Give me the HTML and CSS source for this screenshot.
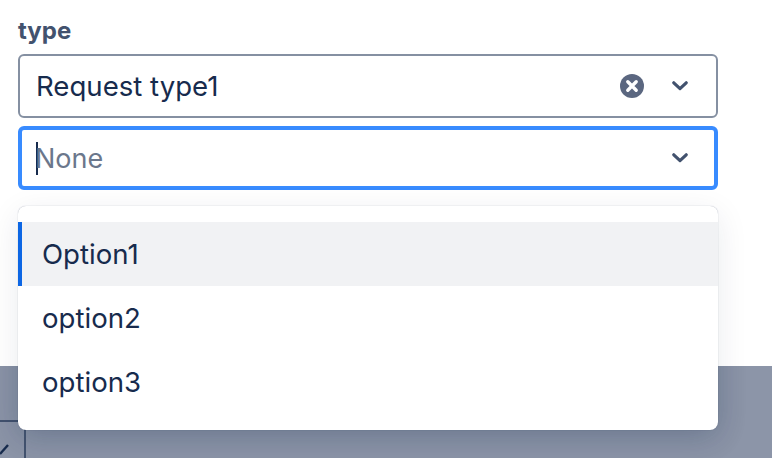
FILE: index.html
```html
<!DOCTYPE html>
<html lang="en">
<head>
    <meta charset="UTF-8">
    <meta name="viewport" content="width=device-width, initial-scale=1.0">
    <title>Request type</title>
    <link rel="stylesheet" href="styles.css">
</head>
<body>

    <div class="form">
        <div class="field-label">type</div>

        <div class="select">
            <span class="select-value">Request type1</span>
            <svg class="clear-icon" width="24" height="24" viewBox="0 0 24 24">
                <circle cx="12" cy="12" r="12" fill="#5b6780"/>
                <path d="M7.8 7.8l8.4 8.4M16.2 7.8l-8.4 8.4" stroke="#fff" stroke-width="3.4" stroke-linecap="round"/>
            </svg>
            <svg class="chevron" width="16" height="10" viewBox="0 0 16 10">
                <path d="M1.8 1.8L8 7.6l6.2-5.8" fill="none" stroke="#42526e" stroke-width="3.2" stroke-linecap="round" stroke-linejoin="round"/>
            </svg>
        </div>

        <div class="select select-focused">
            <span class="caret"></span>
            <span class="select-placeholder">None</span>
            <svg class="chevron" width="16" height="10" viewBox="0 0 16 10">
                <path d="M1.8 1.8L8 7.6l6.2-5.8" fill="none" stroke="#42526e" stroke-width="3.2" stroke-linecap="round" stroke-linejoin="round"/>
            </svg>
        </div>
    </div>

    <!-- Dimmed page behind the dialog -->
    <div class="backdrop">
        <div class="backdrop-line"></div>
        <div class="backdrop-cell">
            <svg class="backdrop-check" width="12" height="14" viewBox="0 0 12 14">
                <path d="M0 12L8 3" fill="none" stroke="#172b4d" stroke-width="2.4"/>
            </svg>
        </div>
    </div>

    <div class="menu">
        <div class="menu-item menu-item-active">Option1</div>
        <div class="menu-item">option2</div>
        <div class="menu-item">option3</div>
    </div>

</body>
</html>
```

FILE: styles.css
```css
/* Basic Reset */
* {
    margin: 0;
    padding: 0;
    box-sizing: border-box;
}

body {
    font-family: 'Inter', 'Liberation Sans', sans-serif;
    background: #fff;
    color: #172b4d;
    width: 772px;
    height: 458px;
    overflow: hidden;
    position: relative;
    display: flex;
    flex-direction: column;
}

/* Form area */
.form {
    height: 366px;
    padding: 17px 54px 0 18px;
    display: flex;
    flex-direction: column;
}

.field-label {
    font-size: 24px;
    line-height: 28px;
    font-weight: 700;
    color: #42526e;
    margin-bottom: 9px;
}

.select {
    height: 64px;
    border: 2px solid #8590a2;
    border-radius: 6px;
    background: #fff;
    padding: 0 28px 0 16px;
    margin-bottom: 8px;
    display: flex;
    align-items: center;
    font-size: 27.6px;
}

.select-focused {
    border: 4px solid #388bff;
    padding: 0 26px 0 14px;
}

.select-value {
    flex: 1;
}

.select-placeholder {
    flex: 1;
    font-size: 27px;
    color: #6b778c;
}

.caret {
    width: 2px;
    height: 33px;
    background: #172b4d;
    margin-right: -3px;
}

.clear-icon {
    margin-right: 28px;
}

/* Dropdown */
.menu {
    position: absolute;
    top: 206px;
    left: 18px;
    width: 700px;
    height: 224px;
    padding: 16px 0;
    background: #fff;
    border-radius: 8px;
    box-shadow: 0 0 1px rgba(9, 30, 66, 0.4), 0 8px 32px rgba(9, 30, 66, 0.09);
}

.menu-item {
    height: 64px;
    padding-left: 24px;
    display: flex;
    align-items: center;
    font-size: 27.6px;
}

.menu-item-active {
    background: #f1f2f4;
    border-left: 4px solid #0c66e4;
    padding-left: 20px;
}

/* Backdrop */
.backdrop {
    flex: 1;
    background: #8c95a8;
    position: relative;
    overflow: hidden;
}

/* extra menu shadow, only shows on the dark part */
.backdrop::before {
    content: "";
    position: absolute;
    top: -160px;
    left: 18px;
    width: 700px;
    height: 224px;
    border-radius: 8px;
    box-shadow: 0 6px 30px rgba(9, 30, 66, 0.16);
}

.backdrop-line {
    height: 2px;
    width: 24px;
    margin-top: 54px;
    background: #42526e;
}

.backdrop-cell {
    width: 26px;
    height: 36px;
    border-right: 2px solid #42526e;
    position: relative;
}

.backdrop-check {
    position: absolute;
    left: 0;
    top: 20px;
}
```
